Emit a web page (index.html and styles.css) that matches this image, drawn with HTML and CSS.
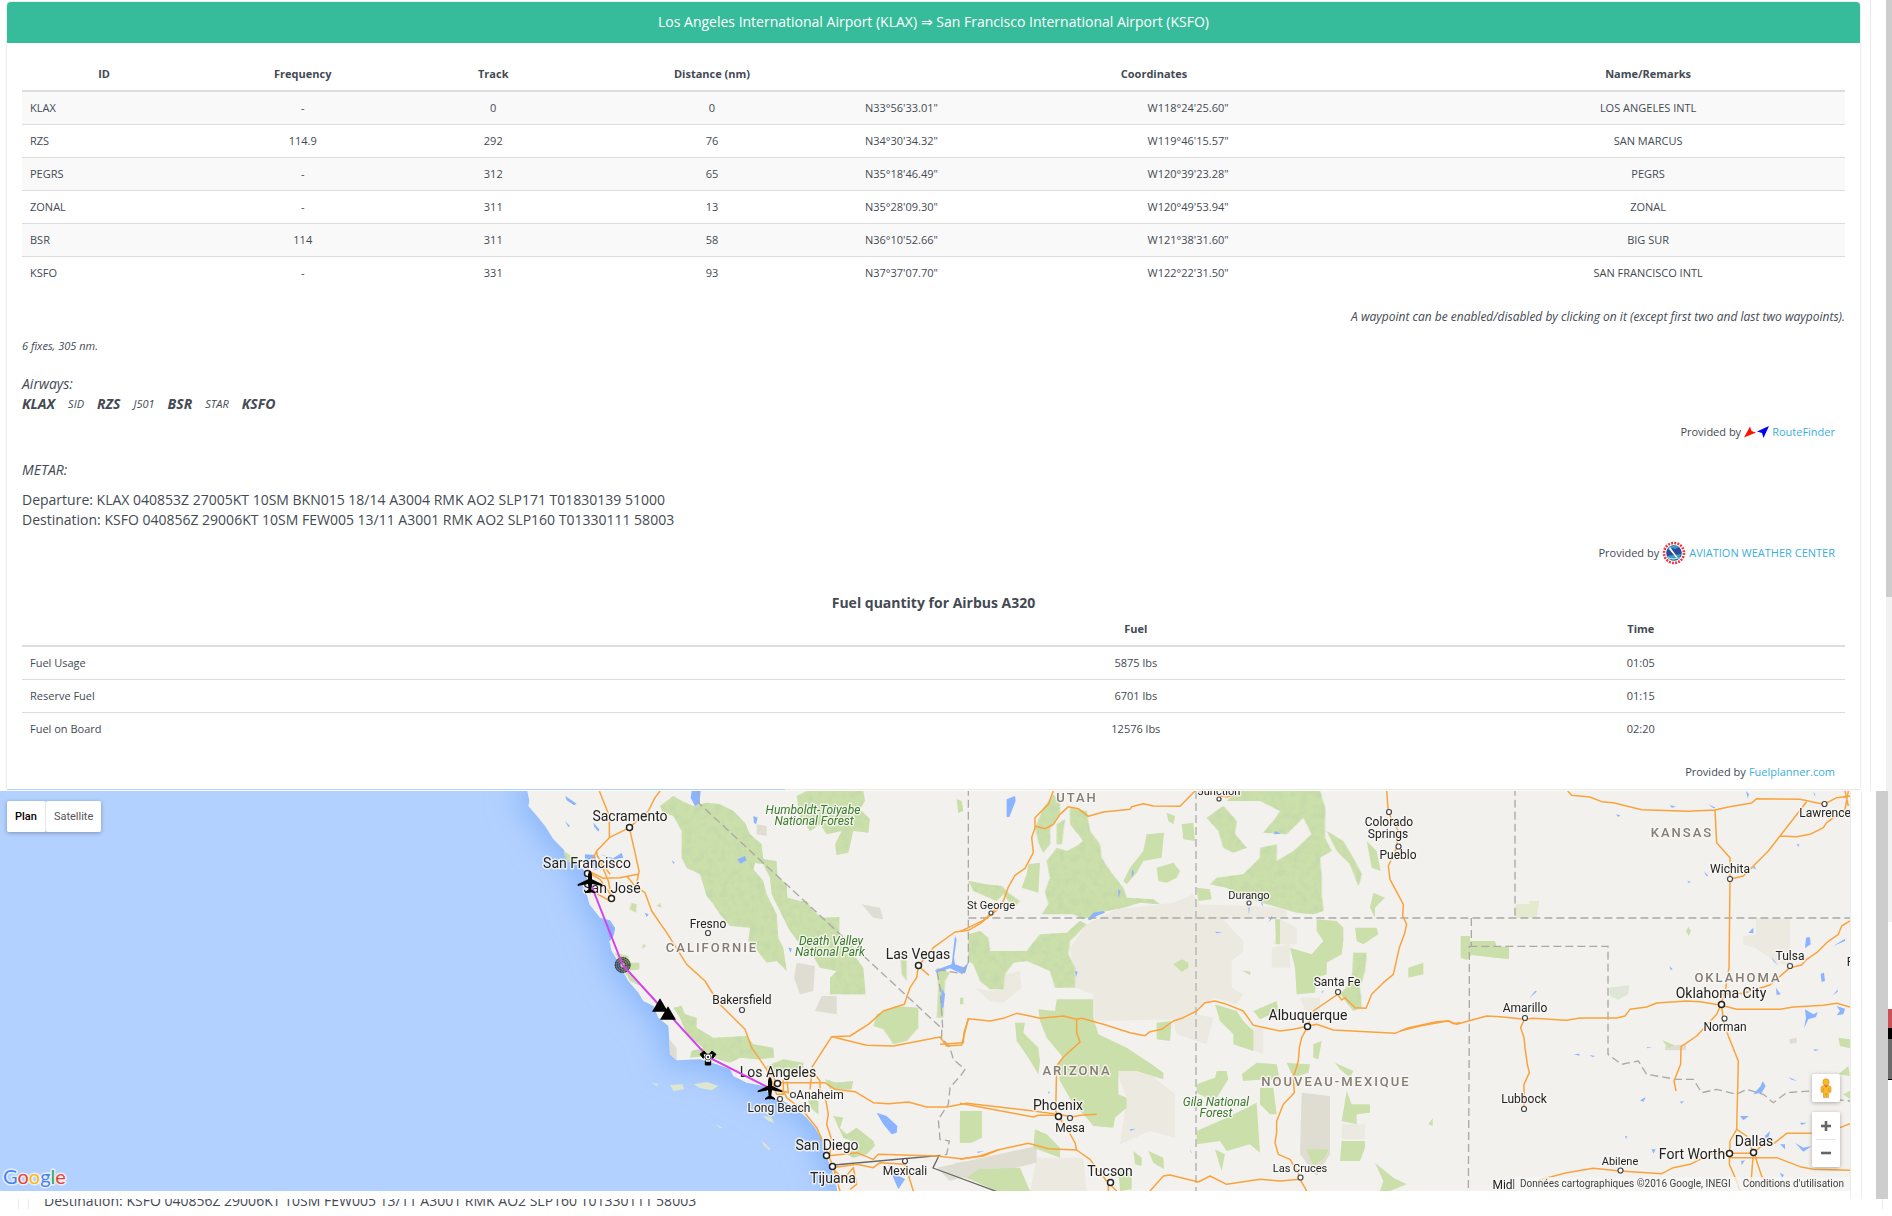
FILE: index.html
```html
<!DOCTYPE html>
<html lang="en">
<head>
<meta charset="utf-8">
<title>Flight plan KLAX – KSFO</title>
<link rel="stylesheet" href="styles.css">
</head>
<body>
<section class="plan-pane">
  <div class="plan-outer">
    <article class="card">
      <h1 class="card-title">Los Angeles International Airport (KLAX) ⇒ San Francisco International Airport (KSFO)</h1>
      <div class="card-body">
        <table class="data striped">
          <colgroup><col class="c-id"><col class="c-freq"><col class="c-track"><col class="c-dist"><col class="c-lat"><col class="c-lon"><col class="c-name"></colgroup>
          <thead><tr><th>ID</th><th>Frequency</th><th>Track</th><th>Distance (nm)</th><th colspan="2">Coordinates</th><th>Name/Remarks</th></tr></thead>
          <tbody>
            <tr><td class="left">KLAX</td><td>-</td><td>0</td><td>0</td><td class="left">N33°56'33.01"</td><td class="left">W118°24'25.60"</td><td>LOS ANGELES INTL</td></tr>
            <tr><td class="left">RZS</td><td>114.9</td><td>292</td><td>76</td><td class="left">N34°30'34.32"</td><td class="left">W119°46'15.57"</td><td>SAN MARCUS</td></tr>
            <tr><td class="left">PEGRS</td><td>-</td><td>312</td><td>65</td><td class="left">N35°18'46.49"</td><td class="left">W120°39'23.28"</td><td>PEGRS</td></tr>
            <tr><td class="left">ZONAL</td><td>-</td><td>311</td><td>13</td><td class="left">N35°28'09.30"</td><td class="left">W120°49'53.94"</td><td>ZONAL</td></tr>
            <tr><td class="left">BSR</td><td>114</td><td>311</td><td>58</td><td class="left">N36°10'52.66"</td><td class="left">W121°38'31.60"</td><td>BIG SUR</td></tr>
            <tr><td class="left">KSFO</td><td>-</td><td>331</td><td>93</td><td class="left">N37°37'07.70"</td><td class="left">W122°22'31.50"</td><td>SAN FRANCISCO INTL</td></tr>
          </tbody>
        </table>
        <p class="hint">A waypoint can be enabled/disabled by clicking on it (except first two and last two waypoints).</p>
        <p class="summary">6 fixes, 305 nm.</p>
        <div class="airways">
          <div>Airways:</div>
          <div class="route"><b>KLAX</b><span>SID</span><b>RZS</b><span>J501</span><b>BSR</b><span>STAR</span><b>KSFO</b></div>
        </div>
        <p class="credit">Provided by
          <svg class="rf-logo" viewBox="0 0 25 12" aria-hidden="true"><path d="M0 11.500 6 .5 7.500 5 12 6.500Z" fill="#f10"/><path d="M25 0 19.500 12 18 7 13 5.500Z" fill="#00f"/></svg>
          <a href="#routefinder">RouteFinder</a></p>
        <div class="metar">
          <h2>METAR:</h2>
          <p>Departure: KLAX 040853Z 27005KT 10SM BKN015 18/14 A3004 RMK AO2 SLP171 T01830139 51000</p>
          <p>Destination: KSFO 040856Z 29006KT 10SM FEW005 13/11 A3001 RMK AO2 SLP160 T01330111 58003</p>
        </div>
        <p class="credit credit-awc">Provided by
          <svg class="awc-logo" viewBox="0 0 24 24" aria-hidden="true"><circle cx="12" cy="12" r="11.500" fill="#fff"/><circle cx="12" cy="12" r="10" fill="none" stroke="#ee3338" stroke-width="2.600" stroke-dasharray="1.900 1.240"/><circle cx="12" cy="12" r="7.800" fill="#2b4aa0"/><path d="M6 7a8 8 0 0 1 11 -1l-4 2-3-1-3 2ZM5 15l14-2a8 8 0 0 1-13 4Z" fill="#3b9fc0"/><path d="m8 6 8 11-2-.5L7 8ZM5 16q7 3 14 0l-2 1.500q-5 1.500-10 0Z" fill="#fff"/></svg>
          <a href="#awc">AVIATION WEATHER CENTER</a></p>
        <h2 class="fuel-title">Fuel quantity for Airbus A320</h2>
        <table class="data">
          <colgroup><col class="f-label"><col class="f-fuel"><col class="f-time"></colgroup>
          <thead><tr><th></th><th>Fuel</th><th>Time</th></tr></thead>
          <tbody>
            <tr><td class="left">Fuel Usage</td><td>5875 lbs</td><td>01:05</td></tr>
            <tr><td class="left">Reserve Fuel</td><td>6701 lbs</td><td>01:15</td></tr>
            <tr><td class="left">Fuel on Board</td><td>12576 lbs</td><td>02:20</td></tr>
          </tbody>
        </table>
        <p class="credit credit-fuel">Provided by <a href="#fuelplanner">Fuelplanner.com</a></p>
      </div>
    </article>
    <div class="map-edge"></div>
  </div>
  <div class="scrollbar"><div class="thumb"></div></div>
</section>

<section class="map-pane">
  <div class="map">
    <svg class="map-canvas" viewBox="0 0 1850 400" preserveAspectRatio="xMinYMin slice" role="img" aria-label="Route map">
      <defs>
        <filter id="blur" x="-20%" y="-20%" width="140%" height="140%"><feGaussianBlur stdDeviation="45"/></filter>
        <filter id="relief" x="0" y="0" width="100%" height="100%">
          <feTurbulence type="fractalNoise" baseFrequency=".14" numOctaves="3" seed="4" result="n"/>
          <feColorMatrix in="n" values="0 0 0 0 .55  0 0 0 0 .70  0 0 0 0 .40  3 0 0 0 -1.350" result="s"/>
          <feComposite in="s" in2="SourceGraphic" operator="in" result="c"/>
          <feMerge><feMergeNode in="SourceGraphic"/><feMergeNode in="c"/></feMerge>
        </filter>
        <path id="land" d="M80 20 88 60 85 75 115 110 135 135 160 175 190 205 205 235 240 255 255 270 262 300 258 330 268 370 300 410 330 418 345 440 340 465 328 480 335 510 350 535 365 565 385 600 415 635 430 660 460 675 475 710 505 735 508 780 510 820 530 838 600 835 650 850 690 865 700 885 740 905 790 915 815 950 850 960 890 985 920 1010 945 1040 965 1075 975 1110 985 1140 1000 1180 1015 1240H4060V20Z"/>
        <path id="plane" d="M0-33C4-33 6-25 6-16V-8L37 7V12L6 6 4 22 15 30V34L2 31 0 35-2 31-15 34V30L-4 22-6 6-37 12V7L-6-8V-16C-6-25-4-33 0-33Z"/>
      </defs>
      <rect width="1850" height="400" fill="#b3d1ff"/>
      <g transform="translate(500 -10) scale(.333333)">
        <use href="#land" fill="#86b4fb" stroke="#8fbafb" stroke-width="60" filter="url(#blur)"/>
        <use href="#land" fill="#f2f1ee"/>
        <path fill="#dfe6cf" d="M455 905 475 908 470 915ZM510 912 548 910 552 925 520 930ZM582 910 620 903 655 915 635 928 600 922ZM785 1003 815 1010 822 1025 805 1020ZM650 1030 668 1042 658 1040ZM785 1078 812 1105 808 1108 790 1092Z"/>
      </g>
      <!-- reservations, deserts and military areas -->
      <g transform="translate(960 -10) scale(.333333)" fill="#ece9e1">
        <path d="M330 500 380 430 470 385 640 365 700 340 720 370 980 380 980 410 790 415 850 480 850 510 815 540 815 620 850 640 830 670 760 650 710 690 660 715 405 720 400 640 345 620 340 560ZM470 870 560 870 645 940 645 1070 570 1050 480 1090 500 950ZM45 620 90 630 130 625 135 580 180 570 185 620 130 665 90 660ZM640 720 710 700 760 710 740 790 650 760ZM850 740 910 740 910 820 860 800ZM935 500 990 490 990 560 935 560ZM1020 650 1080 650 1080 690 1040 700ZM230 1130 370 1130 380 1230 210 1230ZM1145 1030 1215 1030 1215 1075 1145 1075ZM960 415 1010 440 1010 490 940 490Z"/>
        <path fill="#dfddd2" d="M1025 935 1110 945 1110 1120 1070 1185 1020 1120ZM-70 1160 230 1095 230 1145 130 1170 50 1175-30 1200Z"/>
      </g>
      <g transform="translate(500 -10) scale(.333333)" fill="#dfdcd2">
        <path d="M890 545 945 555 940 630 900 640 882 590ZM965 645 1010 645 1010 700 945 690ZM1085 370 1140 380 1150 415 1120 410ZM770 130 800 135 800 165 770 160ZM508 775 530 800 530 838 510 820ZM1365 1145 1500 1135 1500 1230 1430 1200 1350 1180Z"/>
      </g>
      <g transform="translate(1400 -10) scale(.333333)">
        <path fill="#ece9e1" d="M1068 412H1170V555L1130 545 1065 500 1030 490 1030 465 1068 460Z"/>
        <path fill="#e3ead0" d="M347 370 388 368 388 360 418 360 410 410 347 410Z"/>
        <path fill="#dfe6d8" d="M628 620 687 612 685 640 655 656 630 645Z"/>
        <path fill="#dfddd2" d="M795 795 858 790 858 808 795 808ZM1168 775 1190 770 1190 785 1170 788Z"/>
      </g>
      <!-- forests and parks -->
      <g fill="#cbdfaa" filter="url(#relief)">
        <path transform="translate(500 -10) scale(.333333)" d="M480 75 520 45 545 60 580 75 620 65 660 70 700 90 735 125 750 160 785 190 790 235 830 240 832 285 860 310 862 350 900 360 920 360 940 390 965 410 1018 408 1018 470 1060 490 1060 520 1090 560 1097 640 990 640 990 590 1010 570 960 560 935 520 900 490 870 450 850 410 835 380 815 340 810 290 790 250 765 245 760 265 790 300 800 340 830 400 835 470 850 500 860 570 830 540 800 545 765 500 745 480 750 440 690 435 660 400 640 370 620 345 600 280 560 260 545 230 545 150 520 105 490 95ZM890 45 920 30 1090 30 1095 60 1080 85 1110 115 1105 155 1060 150 1045 215 1010 222 1005 190 1025 150 980 160 960 130 930 150 900 110ZM1370 55 1385 60 1390 90 1375 95ZM520 680 545 675 555 700 590 710 590 740 640 770 740 765 760 790 820 800 822 830 770 835 720 830 690 845 620 825 570 830 575 810 610 800 560 760 540 710ZM800 855 850 835 910 845 910 860 860 875 810 880ZM975 895 1010 905 1060 900 1055 925 990 925ZM920 940 955 960 955 1000 930 980ZM1000 1005 1030 1010 1020 1040 1040 1060 1070 1040 1120 1080 1125 1095 1100 1120 1060 1130 1040 1120 1080 1090 1030 1070Z"/>
        <path transform="translate(960 -10) scale(.333333)" d="M25 300 80 310 125 315 150 340 180 360 160 380 130 340 110 360 40 330ZM25 460 60 450 85 470 90 510 200 510 240 460 320 455 360 420 380 430 330 480 325 520 345 560 345 620 285 620 270 570 200 540 160 545 135 580 130 625 90 625 60 600 40 550 25 540ZM225 140 250 80 280 40 300 60 300 100 270 145 270 190 250 215 235 185ZM290 130 315 115 305 190 290 190ZM330 80 380 90 390 150 420 190 425 230 450 270 490 320 500 350 580 355 600 370 540 365 490 380 440 390 370 415 340 400 245 400 265 370 255 330 270 290 260 240 290 200 320 210 350 195 370 180 330 130ZM740 110 790 75 830 120 825 160 860 200 820 215 790 200 775 150ZM800 60 830 30 1080 30 1095 80 1095 170 1115 210 1080 230 1085 290 1085 340 1090 390 1060 400 1010 395 960 380 850 350 800 320 750 310 770 290 850 280 900 230 900 200 950 190 950 240 1000 210 1055 160 1030 110 980 160 910 155 940 120 960 90 900 60ZM1100 150 1150 180 1190 250 1205 280 1195 315 1170 250 1130 210ZM1180 515 1220 515 1215 570 1200 620 1205 680 1180 690 1140 640 1175 600Z"/>
      </g>
      <g fill="#cbdfaa">
        <path transform="translate(500 -10) scale(.333333)" d="M1130 700 1190 675 1255 680 1255 740 1220 780 1180 790 1150 745 1120 735ZM1390 990 1445 990 1445 1070 1415 1085 1380 1085 1380 1020ZM1310 560 1350 575 1335 600 1330 710 1310 710 1315 620ZM395 365 410 370 408 395 388 385ZM190 210 230 235 240 255 200 240ZM345 515 385 525 385 545 418 545 418 565 380 570 410 600 420 615 390 600 360 550ZM1200 510 1220 540 1220 600 1205 580ZM480 365 485 380 470 375ZM430 488 438 495 425 505Z"/>
        <path transform="translate(960 -10) scale(.333333)" d="M205 250 240 245 235 335 185 320 200 280ZM560 160 612 155 605 230 550 240 530 275 500 310 490 300 510 260 550 210ZM590 260 640 245 660 270 650 290 620 305 595 300ZM665 130 700 125 705 180 670 175ZM620 95 645 105 640 130 625 120ZM1220 180 1250 210 1262 270 1235 260ZM1240 335 1275 350 1245 380 1245 410 1230 380ZM710 320 750 325 755 355 715 360ZM1070 415 1130 420 1150 440 1150 480 1145 520 1100 545 1100 580 1070 590 1065 635 1010 640 1005 560 990 500 1055 520 1090 480 1070 450ZM1185 440 1250 440 1255 460 1210 490 1190 480ZM945 415 960 415 960 490 948 490ZM235 685 285 690 290 655 400 655 400 710 415 760 500 800 575 850 610 875 610 895 530 870 475 870 475 940 500 950 500 980 465 1010 460 1040 400 1035 380 1010 340 970 300 900 290 850 310 830 260 770 240 720ZM165 725 195 725 190 755 235 800 240 840 235 880 205 830 170 780ZM590 725 635 720 630 780 590 775ZM640 550 665 535 685 545 685 560 665 572ZM845 568 872 572 870 582ZM845 880 890 845 950 850 960 900 920 895 850 900ZM765 670 830 690 850 720 880 750 880 810 820 790 820 760 780 720ZM880 690 950 660 955 690 900 715ZM710 910 765 890 770 870 800 870 805 895 770 950 740 950 710 935ZM710 1050 800 1010 890 965 900 1115 870 1090 800 1110 780 1080 710 1090ZM900 920 940 920 950 1000 930 1000 900 970ZM980 845 1050 850 1045 875 1000 890ZM1160 930 1175 970 1230 970 1230 995 1190 1000 1190 1030 1145 1020ZM1145 1080 1215 1080 1215 1100 1200 1140 1140 1140ZM1125 845 1180 870 1170 890 1140 865ZM1060 790 1085 780 1075 835 1060 830ZM1245 1145 1300 1190 1340 1210 1290 1230 1260 1230 1270 1200ZM1345 560 1390 545 1390 580 1345 590ZM55 1165 180 1160 210 1230 110 1230 20 1190ZM0 990 65 990 65 1070 30 1085 0 1085ZM225 1045 260 1060 300 1100 300 1130 220 1100ZM475 1165 515 1180 515 1225 480 1230ZM520 1110 545 1130 545 1155 525 1150ZM565 1110 610 1130 612 1165 580 1145ZM765 1105 795 1120 785 1170 775 1140ZM1040 1105 1105 1105 1095 1130 1060 1155ZM1405 1030 1418 1012 1418 1035ZM0 650 10 650 10 670 0 670Z"/>
        <path transform="translate(1400 -10) scale(.333333)" d="M182 465 210 465 210 480 285 480 290 497 327 497 327 535 285 530 215 522 200 537 182 530ZM858 450 865 438 873 450 866 465ZM787 778 822 792 805 802ZM1315 770 1350 775 1350 802 1320 795ZM1315 880 1345 855 1350 885ZM1330 940 1350 930 1350 955Z"/>
      </g>
      <!-- lakes and bays -->
      <g fill="#8ab4ff">
        <path transform="translate(500 -10) scale(.333333)" d="M575 30H602L598 68 585 75 572 50ZM760 105 773 110 768 130 762 125ZM712 235 735 225 740 238 722 248ZM255 220 285 222 290 240 300 262 285 268 270 250 255 245ZM280 125 298 145 295 152 283 138ZM196 45 230 68 222 73 200 58ZM195 120 210 135 205 138ZM300 220 340 232 365 215 370 230 340 236ZM515 238 525 245 520 248ZM434 395 446 400 440 408ZM1130 995 1160 1005 1192 1035 1190 1055 1175 1060 1150 1030ZM1365 465 1370 475 1362 530 1365 550 1395 560 1385 578 1350 562 1310 575 1305 568 1355 550ZM1165 1150 1190 1180 1215 1195 1195 1225 1180 1190ZM865 500 875 502 872 515ZM1325 620 1335 640 1330 680 1322 680ZM320 425 345 440 342 460 330 480 325 460Z"/>
        <path transform="translate(960 -10) scale(.333333)" d="M140 55 165 45 167 60 148 108 140 108ZM383 415 400 395 430 390 435 395 410 405 390 418ZM475 325 482 330 475 352ZM945 150 962 158 942 160ZM512 195 522 212ZM516 265 522 275 515 290ZM345 570 353 572 348 588ZM865 380 869 380 867 402ZM905 360 910 378 904 370ZM925 425 935 405 938 410ZM765 452 788 454 770 457ZM510 1045 527 1043 512 1050ZM690 1105 697 1118 692 1112ZM265 930 270 935 265 938ZM1085 632 1092 626 1086 638ZM0 570 20 550 25 545 15 578ZM50 1112 72 1110 55 1116Z"/>
        <path transform="translate(1400 -10) scale(.333333)" d="M388 652 405 630 411 631ZM1045 455 1060 440 1060 457ZM1218 470 1230 468 1232 490 1215 502ZM1300 495 1335 473 1335 480ZM1262 578 1272 575 1275 600 1265 603ZM1300 642 1313 625 1313 632ZM1310 675 1335 683 1330 700 1310 703 1320 690ZM1215 685 1240 700 1253 693 1248 708 1225 715 1212 742 1218 712ZM1060 940 1082 915 1088 900 1097 915 1085 935ZM1020 1005 1047 1005 1030 1018ZM1140 1090 1155 1090 1155 1105ZM1185 1085 1210 1100 1235 1095 1210 1112ZM720 958 738 948 730 962ZM700 980 718 980ZM755 1105 767 1105 760 1118ZM1023 1140 1035 1138 1025 1152ZM1038 30 1047 40 1043 52ZM810 72 828 77 815 80ZM925 70 947 80 940 82ZM912 270 925 286 918 284ZM1058 262 1064 255 1068 265ZM1165 302 1178 312ZM862 300 873 302 866 306ZM1190 190 1198 190 1195 198ZM648 100 661 103 655 108ZM808 555 818 565 812 567ZM652 600 676 606ZM725 645 734 656ZM740 798 755 800 742 802ZM522 820 538 818 538 824ZM568 822 586 825 578 828ZM1165 888 1192 900 1175 896ZM1200 1025 1220 1025 1205 1032ZM1240 30 1247 45 1242 42ZM1240 805 1258 806 1245 810ZM1140 1175 1152 1182 1146 1190ZM675 1065 682 1066 678 1075ZM840 962 852 960 844 968ZM1095 1065 1110 1050 1105 1075 1100 1085ZM1115 528 1135 555 1120 540ZM1128 620 1142 640 1130 642Z"/>
      </g>
      <!-- state lines and country borders -->
      <g fill="none" stroke="#a9a9a6" stroke-width="4" stroke-dasharray="24 12">
        <g transform="translate(500 -10) scale(.333333)">
          <path d="M592 20 598 68 1325 742 1325 770 1350 800 1360 835 1395 865 1385 880 1350 920 1345 970 1315 1015 1320 1075 1348 1080 1340 1120 1315 1125"/>
          <path d="M1405 20V545L1385 578 1310 565 1320 620 1328 740"/>
          <path d="M1405 411H4050"/>
          <path stroke="#c4c4c1" stroke-width="6" d="M2088 30V1230"/>
        </g>
        <g transform="translate(1400 -10) scale(.333333)">
          <path d="M345 20V411M214 411V496H208V720L205 1230M208 496H624V820L665 850 715 840 740 880 830 895 880 895 905 935 950 925 1010 940 1040 925 1090 940 1120 965 1160 935 1230 930 1300 955 1350 960"/>
        </g>
        <path d="M834 374 939 364.500 933 377 998 401" stroke="#666" stroke-width="1.300" stroke-dasharray="none"/>
      </g>
      <!-- interstates -->
      <g fill="none" stroke="#faa33c" stroke-width="4.500" stroke-linejoin="round">
        <g transform="translate(500 -10) scale(.333333)">
          <path d="M298 30 328 105V170M480 30 465 50 445 90 405 125 388 140 328 170 290 210 292 225 330 280M388 140 405 215 417 270 410 310M265 270 310 292 360 290 413 280M290 210 275 240M380 285 405 315 435 335 455 390 500 455 560 550 615 600 655 665 735 745 755 800 800 865 832 905M262 280 285 335 325 357 335 350 325 300 300 240M265 275 300 295 335 345"/>
          <path d="M800 865 815 920 850 930 860 950 910 990 950 1040 975 1095 1000 1160 1020 1230M830 905H975L1005 925 1065 932 1120 965 1165 968 1225 963 1280 978 1340 978 1400 967 1600 990 1720 1007 1740 1003 1790 1000M832 925 865 935 860 890 895 875 945 880 960 900 960 925 978 960 985 1000 980 1030 993 1070 990 1120M935 880 930 925M815 900 830 940 850 940 850 895M935 860 995 767 1050 765 1105 730 1150 690 1213 670 1230 620 1250 590 1255 555 1287 583M1255 555 1300 500 1365 453 1405 448 1440 428 1500 380M995 767 1100 793 1180 795 1320 768 1340 795 1385 792 1405 713M980 1125 1070 1115 1120 1135 1135 1120 1310 1125 1385 1133 1450 1125 1500 1105M997 1160 1070 1150 1120 1160 1140 1145 1215 1150 1240 1230M1000 1165 1030 1195 1060 1160 1070 1210 1050 1225"/>
        </g>
        <g transform="translate(960 -10) scale(.333333)">
          <path d="M280 30 265 70 225 110V140L215 170 220 215 195 262 165 283 145 318 130 360 93 398 70 418 25 440 0 452M225 135 255 143 280 130 300 100 325 77 355 83 370 95 385 106 430 93 510 85 515 77 550 68 580 75 660 76 705 30"/>
          <path d="M-60 790 10 785 12 755 25 713 90 720 130 712 170 697 210 705 240 712 310 705 350 715 365 712 430 730 510 755 555 764 570 752 605 745 640 720 670 710 710 690 735 665 765 660 795 668 850 690 880 733 960 750 1000 745 1070 730 1120 747 1305 757 1340 742 1430 722 1465 720 1480 728 1500 725M350 715 350 755 360 783 310 828 290 855 287 990 295 1005 325 1050 345 1085 350 1107M0 967 220 1008 235 1003H290M0 1135 60 1125 110 1108 205 1087 265 1103 350 1107 390 1135 440 1200 470 1230M445 1200V1230M570 1230 610 1185 630 1182 715 1203 750 1185 800 1210 900 1195 960 1200 1020 1195 1040 1230"/>
          <path d="M1043 737 1025 770 1018 800 1015 840 1000 890 1003 935 970 970 950 1020 950 1055 945 1085 955 1120 990 1135 1022 1190M1043 737 1060 690 1133 640 1145 657 1155 650 1185 680 1218 682 1235 640 1270 605 1300 580 1318 500 1333 460 1340 430 1328 405 1330 370 1290 295 1285 255 1310 200 1315 150 1285 95 1280 30M715 30 760 40 800 48 835 40"/>
        </g>
        <g transform="translate(1400 -10) scale(.333333)">
          <path d="M503 30 515 43 570 48 605 62 640 65 725 86 865 91 945 87 985 78 1055 66 1070 53 1200 55 1272 70 1310 50 1350 45M1220 62 1140 165 1105 210 1030 285 990 295M945 87 950 185 990 230V295L987 560 975 635 962 670M1140 165 1190 167 1230 160 1270 140 1280 125 1335 85 1345 30M1335 30 1345 75M0 750 60 735 145 719 170 730 260 705 300 707 375 715 400 712 500 718 540 711 650 711 675 705 690 685 740 678 770 666 860 660 900 662 960 672 1010 685 1140 685 1180 678 1270 673 1310 667 1350 678M375 711 362 740 372 770 375 800 382 850 388 875 372 910V980M962 672 950 700 890 765 843 797 842 850 822 900 828 930M965 672 970 720 985 765 1015 840 1010 1045 990 1080 988 1150 1010 1200 1020 1230M962 640 1030 637 1110 612 1170 560 1205 552 1220 535 1250 515 1280 485 1315 460 1325 435 1350 420M1010 1045 1040 1065 1060 1115 1085 1095 1125 1085 1160 1057 1235 1057M1320 1040 1350 1028M988 1117H1060M415 1198 500 1175 580 1162 660 1170 785 1178 820 1160 870 1150 935 1118 988 1117M985 1130H1130L1200 1157 1240 1165M1060 1117 1055 1180 1050 1225M1065 1125 1085 1185 1110 1215M1240 1165 1350 1168"/>
        </g>
      </g>
      <!-- labels -->
      <g class="map-labels">
        <g class="state"><text x="712" y="161">CALIFORNIE</text><text x="1077" y="11">UTAH</text><text x="1077" y="284">ARIZONA</text><text x="1336" y="295">NOUVEAU-MEXIQUE</text><text x="1682" y="46">KANSAS</text><text x="1738" y="191">OKLAHOMA</text></g>
        <g class="park"><text x="813" y="23">Humboldt-Toiyabe</text><text x="814" y="34">National Forest</text><text x="831" y="154">Death Valley</text><text x="830" y="165">National Park</text><text x="1216" y="315">Gila National</text><text x="1216" y="326">Forest</text></g>
        <g class="city-l"><text x="630" y="30">Sacramento</text><text x="587" y="77">San Francisco</text><text x="612" y="102">San José</text><text x="918" y="168">Las Vegas</text><text x="778" y="286">Los Angeles</text><text x="827" y="359">San Diego</text><text x="833" y="392">Tijuana</text><text x="1308" y="229">Albuquerque</text><text x="1058" y="319">Phoenix</text><text x="1110" y="385">Tucson</text><text x="1721" y="207">Oklahoma City</text><text x="1692" y="368">Fort Worth</text><text x="1754" y="355">Dallas</text></g>
        <g class="city-m"><text x="708" y="137">Fresno</text><text x="742" y="213">Bakersfield</text><text x="820" y="308">Anaheim</text><text x="779" y="321">Long Beach</text><text x="905" y="384">Mexicali</text><text x="1389" y="35">Colorado</text><text x="1388" y="47">Springs</text><text x="1398" y="68">Pueblo</text><text x="1337" y="195">Santa Fe</text><text x="1070" y="341">Mesa</text><text x="1825" y="26">Lawrence</text><text x="1730" y="82">Wichita</text><text x="1790" y="169">Tulsa</text><text x="1725" y="240">Norman</text><text x="1525" y="221">Amarillo</text><text x="1524" y="312">Lubbock</text><text x="1504" y="398">Midl</text><text x="1850" y="175">F</text></g>
        <g class="city-s"><text x="991" y="118">St George</text><text x="1219" y="4">Junction</text><text x="1249" y="108">Durango</text><text x="1300" y="381">Las Cruces</text><text x="1620" y="374">Abilene</text></g>
      </g>
      <g fill="#fff" stroke="#222" stroke-width="1.500">
        <circle cx="629.500" cy="36.500" r="3"/><circle cx="587.500" cy="82.500" r="3"/><circle cx="611.500" cy="107.500" r="3"/><circle cx="918.500" cy="174.500" r="3"/><circle cx="777.500" cy="292.500" r="3"/><circle cx="826.500" cy="364.500" r="3"/><circle cx="832.500" cy="375.500" r="3"/><circle cx="1307.500" cy="235.500" r="3"/><circle cx="1058.500" cy="325.500" r="3"/><circle cx="1110.500" cy="391.500" r="3"/><circle cx="1721.500" cy="213.500" r="3"/><circle cx="1729.500" cy="362.500" r="3"/><circle cx="1753.500" cy="361.500" r="3"/>
      </g>
      <g fill="#fff" stroke="#444" stroke-width="1.200">
        <circle cx="708" cy="142" r="2.500"/><circle cx="742" cy="219" r="2.500"/><circle cx="793" cy="304" r="2.500"/><circle cx="780" cy="308" r="2.500"/><circle cx="905" cy="370" r="2.500"/><circle cx="1389" cy="21" r="2.500"/><circle cx="1398.500" cy="55.500" r="2.500"/><circle cx="1338" cy="201" r="2.500"/><circle cx="1070" cy="327" r="2.500"/><circle cx="1824.500" cy="13" r="2.500"/><circle cx="1730" cy="88" r="2.500"/><circle cx="1790" cy="175" r="2.500"/><circle cx="1724.500" cy="227.500" r="2.500"/><circle cx="1525" cy="227" r="2.500"/><circle cx="1524" cy="318" r="2.500"/><circle cx="991" cy="122" r="2"/><circle cx="1219" cy="8" r="2"/><circle cx="1249" cy="112" r="2"/><circle cx="1300.500" cy="386.500" r="2.500"/><circle cx="1620.500" cy="379.500" r="2.500"/>
      </g>
      <!-- flight route and its waypoints -->
      <g transform="translate(500 -10) scale(.333333)">
        <circle cx="368" cy="552" r="24" fill="#222" fill-opacity=".45"/>
        <g fill="none" stroke="#111" stroke-width="3" stroke-dasharray="3 2"><circle cx="368" cy="552" r="22"/><circle cx="368" cy="552" r="16"/><circle cx="368" cy="552" r="10"/></g>
        <circle cx="368" cy="552" r="5" fill="#fff"/>
        <path fill="none" stroke="#d640ea" stroke-width="6" d="M270 303 368 552 480 675 504 697 624 828 810 922"/>
        <use href="#plane" x="270" y="303"/>
        <use href="#plane" x="810" y="922"/>
        <path d="M480 652 504 692H456ZM504 676 528 716H480Z"/>
        <path d="M600 820 612 810 620 820 610 832ZM648 820 636 810 628 820 638 832ZM616 838H632V852H616Z" stroke="#000" stroke-width="3"/>
        <path d="M611 820 637 820 630 842 618 842Z" fill="#fff"/><circle cx="624" cy="828" r="9" fill="#fff" stroke="#000" stroke-width="2"/><circle cx="624" cy="828" r="3"/>
      </g>
      <text class="google" x="3" y="393"><tspan fill="#4285f4">G</tspan><tspan fill="#ea4335">o</tspan><tspan fill="#fbbc05">o</tspan><tspan fill="#4285f4">g</tspan><tspan fill="#34a853">l</tspan><tspan fill="#ea4335">e</tspan></text>
    </svg>
    <div class="map-type"><button type="button" class="active">Plan</button><button type="button">Satellite</button></div>
    <div class="map-tools">
      <button type="button" class="pegman" aria-label="Street View"><svg viewBox="0 0 12 20" aria-hidden="true"><path d="M3.500 7.500H8.500L11 9V14L9.500 14.500 8.500 10.500V19.500H6.500L6 15 5.500 19.500H3.500V10.500L2.500 14.500 1 14V9Z" fill="#fbb829" stroke="#d98e1b" stroke-width=".6"/><circle cx="6" cy="4" r="3.200" fill="#fbb829" stroke="#d98e1b" stroke-width=".6"/><path d="M4 7.500H8L6 9.500Z" fill="#e2642b"/></svg></button>
      <div class="zoom"><button type="button" aria-label="Zoom in"><svg viewBox="0 0 10 10" aria-hidden="true"><path d="M4 0H6V4H10V6H6V10H4V6H0V4H4Z" fill="#666" stroke="#666" stroke-width=".6"/></svg></button><button type="button" aria-label="Zoom out"><svg viewBox="0 0 10 10" aria-hidden="true"><path d="M0 4H10V6H0Z" fill="#666" stroke="#666" stroke-width=".6"/></svg></button></div>
    </div>
    <div class="attribution"><span>Données cartographiques ©2016 Google, INEGI</span><a href="#terms">Conditions d'utilisation</a></div>
  </div>
  <div class="gutter"><div></div></div>
  <div class="track"></div>
  <div class="page-edge"><i class="e-bar"></i><i class="e-gap"></i><i class="e-red"></i><i class="e-black"></i><i class="e-grey"></i></div>
</section>

<section class="next-pane">
  <div class="next-outer"><div class="next-card"><p>Destination: KSFO 040856Z 29006KT 10SM FEW005 13/11 A3001 RMK AO2 SLP160 T01330111 58003</p></div></div>
</section>
</body>
</html>
```
FILE: styles.css
```css
* { box-sizing: border-box; }
body {
  margin: 0;
  background: #fff;
  color: #434a54;
  font: 14px/20px "Open Sans", sans-serif;
}
h1, h2, p { margin: 0; font-size: 14px; font-weight: 400; }
a { color: #3bafda; text-decoration: none; }

/* flight plan */
.plan-pane { display: flex; }
.plan-outer {
  flex: 1;
  padding-top: 2px;
  padding-bottom: 1px;
  margin-right: 15px;
  border-right: 1px solid #ebebeb;
}
.card {
  margin: 0 10px 0 7px;
  border-radius: 4px 4px 0 0;
  background: #fff;
  box-shadow: 0 0 2px rgba(0, 0, 0, .25);
}
.card-title {
  padding: 10px 15px 11px;
  border-radius: 4px 4px 0 0;
  background: #37bc9b;
  color: #fff;
  text-align: center;
}
.card-body { padding: 15px 15px 9px; }
.data {
  width: 100%;
  table-layout: fixed;
  border-collapse: separate;
  border-spacing: 0;
  font-size: 11px;
  line-height: 16px;
  text-align: center;
}
.data th { padding: 8px; border-bottom: 2px solid #ddd; font-weight: 700; }
.data td { padding: 8px; }
.data tr + tr td { border-top: 1px solid #ddd; }
.data .left { text-align: left; }
.striped tbody tr:nth-child(odd) { background: #f9f9f9; }
.c-id { width: 9%; }
.c-freq { width: 12.8%; }
.c-track { width: 8.1%; }
.c-dist { width: 15.9%; }
.c-lat { width: 15.5%; }
.c-lon { width: 17.1%; }
.c-name { width: 21.6%; }
.f-label { width: 44.6%; }
.f-fuel { width: 33%; }
.f-time { width: 22.4%; }

.hint, .summary { font-size: 12px; line-height: 16px; font-style: italic; }
.hint { margin-top: 20px; text-align: right; }
.summary { margin-top: 13px; font-size: 11px; }
.airways { margin-top: 20px; font-style: italic; }
.route { display: flex; gap: 13px; }
.route span { font-size: 11px; }
.credit {
  display: flex;
  justify-content: flex-end;
  align-items: center;
  gap: 3px;
  margin-top: 10px;
  padding-right: 10px;
  font-size: 11px;
  line-height: 16px;
}
.rf-logo { width: 25px; height: 12px; }
.awc-logo { width: 24px; height: 24px; }
.metar { margin-top: 20px; }
.metar h2 { margin-bottom: 10px; font-style: italic; }
.credit-awc { margin-top: 11px; }
.fuel-title { margin-top: 28px; text-align: center; font-weight: 700; }
.credit-fuel { margin-top: 19px; }
.map-edge {
  height: 1px;
  margin: 0 10px 0 7px;
  background: linear-gradient(90deg, #b3d1ff 42%, #e8eadf 42%);
}
.scrollbar { width: 6px; background: #f1f1f1; }
.thumb { height: 597px; max-height: 76%; background: #cdcdcd; }

/* map */
.map-pane { display: flex; height: 408px; }
.map { position: relative; flex: 1; height: 400px; overflow: hidden; }
.map-canvas { display: block; width: 100%; height: 400px; }
.map-labels { font-family: Roboto, sans-serif; text-anchor: middle; fill: #222; }
.map-labels text, .google {
  paint-order: stroke;
  stroke: #f7f6f4;
  stroke-width: 3px;
  stroke-opacity: .8;
  stroke-linejoin: round;
}
.state { font-size: 13px; font-weight: 500; letter-spacing: 2px; fill: #857c72; }
.park { font-size: 12px; font-style: italic; fill: #3c7a2d; }
.city-l { font-size: 14px; }
.city-m { font-size: 12px; }
.city-s { font-size: 11px; }
.google { font: 20px Lato, sans-serif; }
.map button { margin: 0; border: 0; background: #fff; font-family: Roboto, sans-serif; }
.map-type {
  position: absolute;
  top: 10px;
  left: 7px;
  display: flex;
  border-radius: 2px;
  box-shadow: 0 1px 4px rgba(0, 0, 0, .3);
}
.map-type button { height: 31px; padding: 0 8px; font-size: 11px; color: #565656; border-radius: 2px; }
.map-type .active { color: #000; font-weight: 500; border-right: 1px solid #e6e6e6; }
.map-tools {
  position: absolute;
  right: 10px;
  bottom: 24px;
  display: flex;
  flex-direction: column;
  gap: 10px;
}
.map-tools button { display: flex; align-items: center; justify-content: center; width: 28px; padding: 0; }
.pegman { height: 28px; border-radius: 2px; box-shadow: 0 1px 4px rgba(0, 0, 0, .3); }
.pegman svg { width: 12px; height: 20px; }
.zoom { border-radius: 2px; background: #fff; box-shadow: 0 1px 4px rgba(0, 0, 0, .3); }
.zoom button { height: 27px; border-radius: 2px; }
.zoom button + button { position: relative; height: 28px; }
.zoom button + button::before {
  content: "";
  position: absolute;
  top: 0;
  left: 4px;
  right: 4px;
  height: 1px;
  background: #e6e6e6;
}
.zoom svg { width: 10px; height: 10px; }
.attribution {
  position: absolute;
  right: 0;
  bottom: 0;
  display: flex;
  gap: 12px;
  padding: 0 6px;
  background: rgba(245, 245, 245, .75);
  font: 10px/14px Roboto, sans-serif;
  color: #444;
}
.attribution a { color: #444; }
.gutter { width: 26px; }
.gutter div { width: 12px; height: 100%; border: solid #ebebeb; border-width: 0 1px; }
.track { width: 12px; background: #cdcdcd; }
.page-edge { display: flex; flex-direction: column; width: 4px; }
.e-bar { height: 131px; background: #f1f1f1; }
.e-gap { height: 87px; }
.e-red { height: 19px; background: #cb5058; }
.e-black { height: 11px; background: #000; }
.e-grey { height: 41px; background: #6b6b6b; border-bottom: 1px solid #000; }

/* following plan, scrolled under the map */
.next-pane { height: 18px; overflow: hidden; }
.next-outer { height: 100%; margin: 0 9px 0 18px; border: solid #ebebeb; border-width: 0 1px; }
.next-card { height: 100%; margin-left: 9px; padding-left: 15px; border-left: 1px solid #ebebeb; }
.next-card p { margin-top: -8px; }
```
